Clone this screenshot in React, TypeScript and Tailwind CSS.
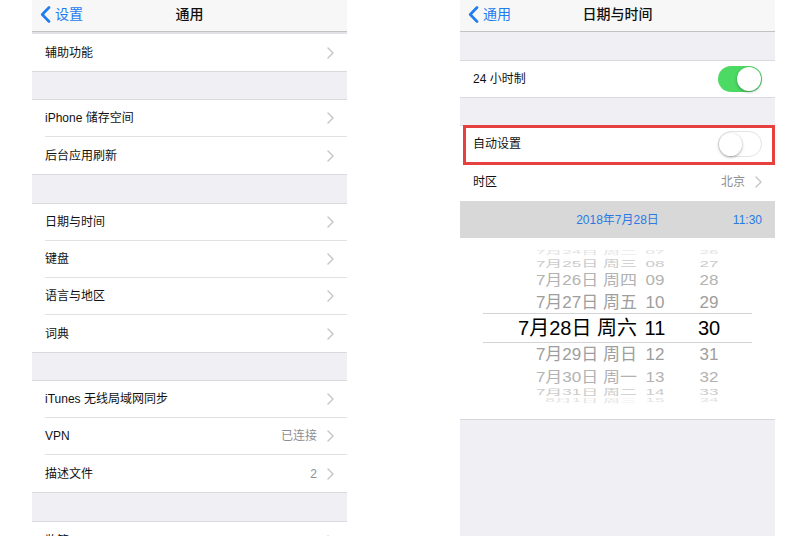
const font = "font-['Liberation_Sans','Noto_Sans_CJK_SC',sans-serif]";

function BackChevron() {
  return (
    <svg width="11" height="17" viewBox="0 0 11 17" fill="none">
      <path d="M9 1.5 L2.2 8.5 L9 15.5" stroke="#1f7bf0" strokeWidth="2.6" strokeLinecap="round" strokeLinejoin="round" />
    </svg>
  );
}

function Chevron() {
  return (
    <svg width="7" height="12" viewBox="0 0 7 12" fill="none">
      <path d="M1 1 L6 6 L1 11" stroke="#c4c4c9" strokeWidth="1.4" strokeLinecap="round" strokeLinejoin="round" />
    </svg>
  );
}

function NavBar({ back, title }: { back: string; title: string }) {
  return (
    <div className="grid h-[32px] shrink-0 grid-cols-[1fr_auto_1fr] items-center border-b border-[#c2c2c6] bg-[#f7f7f7] pb-[3px]">
      <div className="flex items-center gap-[4px] pl-[8px] text-[14px] text-[#1f7bf0]">
        <BackChevron />
        <span>{back}</span>
      </div>
      <span className="text-[14px] font-medium text-[#111]">{title}</span>
      <div />
    </div>
  );
}

function Gap({ h }: { h: string }) {
  return <div className={`${h} shrink-0 border-y border-[#dadade] bg-[#efeff4]`} />;
}

function Row({
  label,
  value,
  last,
  height = 'h-[37px]',
}: {
  label: string;
  value?: string;
  last?: boolean;
  height?: string;
}) {
  return (
    <div className={`flex ${height} shrink-0 bg-white pl-[13px]`}>
      <div
        className={`flex flex-1 items-center pr-[13px] ${last ? '' : 'border-b border-[#e1e1e4]'}`}
      >
        <span className="text-[12px] text-[#111]">{label}</span>
        <div className="ml-auto flex items-center gap-[10px]">
          {value && <span className="text-[12px] text-[#8e8e93]">{value}</span>}
          <Chevron />
        </div>
      </div>
    </div>
  );
}

function Toggle({ on }: { on: boolean }) {
  if (on) {
    return (
      <div className="flex h-[26px] w-[44px] items-center justify-end rounded-full bg-[#4cd964] pr-[1px]">
        <div className="h-[24px] w-[24px] rounded-full bg-white shadow-[0_1px_3px_rgba(0,0,0,0.35)]" />
      </div>
    );
  }
  return (
    <div className="flex h-[26px] w-[44px] items-center rounded-full border-[1.5px] border-[#e3e3e6] bg-white">
      <div className="h-[23px] w-[23px] rounded-full bg-white shadow-[0_1px_3px_rgba(0,0,0,0.35)]" />
    </div>
  );
}

const pickerRows = [
  { d: '7月24日 周二', h: '07', m: '26', slot: 'h-[10px]', cls: 'scale-y-[0.3] text-[#e3e3e3]' },
  { d: '7月25日 周三', h: '08', m: '27', slot: 'h-[12px]', cls: 'scale-y-[0.55] text-[#cbcbcb]' },
  { d: '7月26日 周四', h: '09', m: '28', slot: 'h-[22px]', cls: 'scale-y-[0.85] text-[#b2b2b2]' },
  { d: '7月27日 周五', h: '10', m: '29', slot: 'h-[22px]', cls: 'scale-y-[0.97] text-[#9e9e9e]' },
  { d: '7月28日 周六', h: '11', m: '30', slot: 'sel', cls: '' },
  { d: '7月29日 周日', h: '12', m: '31', slot: 'h-[23px]', cls: 'scale-y-[0.97] text-[#9e9e9e]' },
  { d: '7月30日 周一', h: '13', m: '32', slot: 'h-[22px]', cls: 'scale-y-[0.85] text-[#b2b2b2]' },
  { d: '7月31日 周二', h: '14', m: '33', slot: 'h-[9px]', cls: 'scale-y-[0.5] text-[#cbcbcb]' },
  { d: '8月1日 周三', h: '15', m: '34', slot: 'h-[7px]', cls: 'scale-y-[0.28] text-[#e3e3e3]' },
];

function Picker() {
  return (
    <div className="flex h-[181px] shrink-0 flex-col bg-white pt-[9px]">
      {pickerRows.map((r) =>
        r.slot === 'sel' ? (
          <div
            key={r.d}
            className="mx-[23px] flex h-[30px] shrink-0 items-center border-y border-[#d4d4d6] text-[20px] leading-none text-black"
          >
            <span className="w-[154px] whitespace-nowrap text-right">{r.d}</span>
            <span className="ml-[1px] w-[34px] text-center">{r.h}</span>
            <span className="ml-[20px] w-[34px] text-center">{r.m}</span>
          </div>
        ) : (
          <div key={r.d} className={`flex ${r.slot} shrink-0 items-center`}>
            <div className={`flex w-full items-center text-[17px] leading-none ${r.cls}`}>
              <span className="w-[177px] whitespace-nowrap text-right">{r.d}</span>
              <span className="ml-[1px] w-[34px] text-center">{r.h}</span>
              <span className="ml-[20px] w-[34px] text-center">{r.m}</span>
            </div>
          </div>
        ),
      )}
    </div>
  );
}

function GeneralScreen() {
  return (
    <div className="flex h-[536px] w-[315px] shrink-0 flex-col overflow-hidden bg-[#efeff4]">
      <NavBar back="设置" title="通用" />
      <div className="h-[2px] shrink-0 bg-[#e2e2e6]" />
      <Row label="辅助功能" last />
      <Gap h="h-[29px]" />
      <Row label="iPhone 储存空间" />
      <Row label="后台应用刷新" last />
      <Gap h="h-[30px]" />
      <Row label="日期与时间" />
      <Row label="键盘" />
      <Row label="语言与地区" />
      <Row label="词典" last />
      <Gap h="h-[29px]" />
      <Row label="iTunes 无线局域网同步" />
      <Row label="VPN" value="已连接" />
      <Row label="描述文件" value="2" last />
      <Gap h="h-[30px]" />
      <Row label="监管" last />
    </div>
  );
}

function DateTimeScreen() {
  return (
    <div className="flex h-[536px] w-[315px] shrink-0 flex-col overflow-hidden bg-[#efeff4]">
      <NavBar back="通用" title="日期与时间" />
      <div className="h-[29px] shrink-0 border-b border-[#dadade] bg-[#efeff4]" />
      <div className="flex h-[36px] shrink-0 items-center bg-white px-[13px]">
        <span className="text-[12px] text-[#111]">24 小时制</span>
        <div className="ml-auto">
          <Toggle on />
        </div>
      </div>
      <Gap h="h-[29px]" />
      <div className="relative shrink-0">
        <div className="flex h-[37px] bg-white pl-[13px]">
          <div className="flex flex-1 items-center border-b border-[#e1e1e4] pr-[13px]">
            <span className="text-[12px] text-[#111]">自动设置</span>
            <div className="ml-auto">
              <Toggle on={false} />
            </div>
          </div>
        </div>
        <div className="absolute -top-[1px] left-[3px] right-0 h-[40px] border-[3px] border-[#e6403f]" />
      </div>
      <Row label="时区" value="北京" last height="h-[38px]" />
      <div className="grid h-[37px] shrink-0 grid-cols-[1fr_auto_1fr] items-center bg-[#d8d8d8] text-[12px] text-[#2a7ae2]">
        <div />
        <span>2018年7月28日</span>
        <span className="pr-[13px] text-right">11:30</span>
      </div>
      <Picker />
      <div className="flex-1 border-t border-[#d6d6da] bg-[#efeff4]" />
    </div>
  );
}

export default function App() {
  return (
    <div className={`flex h-[536px] w-[808px] overflow-hidden bg-white pl-[32px] ${font}`}>
      <GeneralScreen />
      <div className="w-[113px] shrink-0" />
      <DateTimeScreen />
    </div>
  );
}
